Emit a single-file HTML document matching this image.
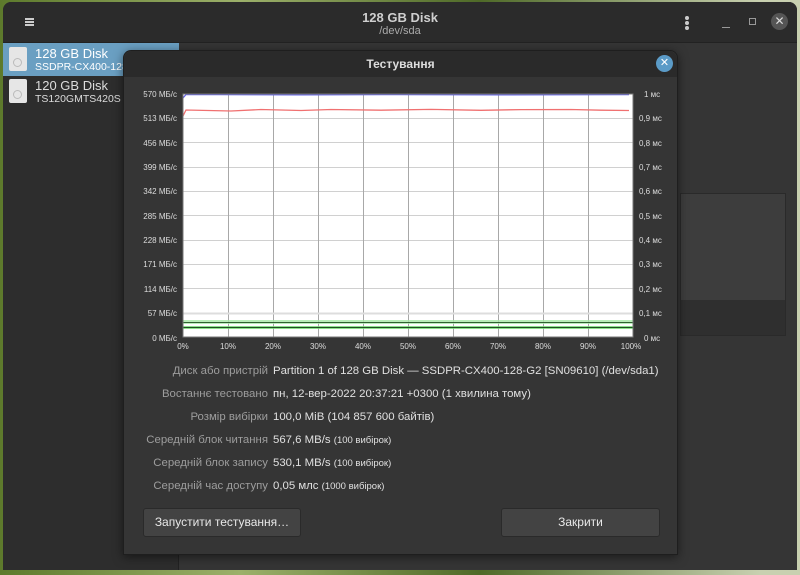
<!DOCTYPE html>
<html><head><meta charset="utf-8"><style>
*{margin:0;padding:0;box-sizing:border-box}
body{width:800px;height:575px;overflow:hidden;background:linear-gradient(90deg,#5d7a2c,#9cb06a 30%,#4f6a28 60%,#c8d0b0 95%);font-family:"Liberation Sans","DejaVu Sans",sans-serif;position:relative}
.win{position:absolute;left:3px;top:2px;width:794px;height:568px;background:#353535;border-radius:8px 8px 0 0;overflow:hidden}
.hdr{position:absolute;left:0;top:0;width:794px;height:41px;background:#2b2b2b;border-bottom:1px solid #222}
.side{position:absolute;left:0;top:41px;width:176px;height:527px;background:#2d2d2d;border-right:1px solid #222}
.abs{position:absolute}
.t{color:#dcdcdc;font-size:12px;white-space:nowrap}
.dlg{position:absolute;left:123px;top:50px;width:555px;height:505px;background:#353535;border:1px solid #1e1e1e;border-radius:8px 8px 0 0;box-shadow:0 2px 10px rgba(0,0,0,.5)}
.dh{position:absolute;left:0;top:0;width:553px;height:26px;background:#2a2a2a;border-radius:8px 8px 0 0}
.row{position:absolute;left:0;width:555px;height:16px}
.row .l{position:absolute;right:411px;color:#9d9d9d;font-size:11.4px;white-space:nowrap}
.row .v{position:absolute;left:149px;color:#e0e0e0;font-size:11.4px;white-space:nowrap}
.row small{font-size:9.5px}
.btn{position:absolute;height:29px;background:#434343;border:1px solid #2a2a2a;border-radius:3px;color:#e8e8e8;font-size:12px;text-align:center;line-height:27px}
</style></head><body>
<div class="win">
 <div class="hdr">
  <div class="abs" style="left:22px;top:16px;width:9px;height:2px;background:#ccc;box-shadow:0 3px 0 #ccc,0 6px 0 #ccc"></div>
  <div class="abs t" style="left:0;width:794px;text-align:center;top:8px;font-weight:bold;font-size:13px;color:#cfcfcf">128 GB Disk</div>
  <div class="abs t" style="left:0;width:794px;text-align:center;top:23px;font-size:11px;color:#aaa">/dev/sda</div>
  <div class="abs" style="left:682px;top:14px;width:4px;height:4px;border-radius:2px;background:#ccc;box-shadow:0 5px 0 #ccc,0 10px 0 #ccc"></div>
  <div class="abs" style="left:719px;top:25px;width:8px;height:1px;background:#999"></div>
  <div class="abs" style="left:746px;top:16px;width:7px;height:7px;border:1px solid #999"></div>
  <div class="abs" style="left:768px;top:11px;width:17px;height:17px;border-radius:50%;background:#555;color:#ddd;font-size:12px;text-align:center;line-height:17px">✕</div>
 </div>
 <div class="side">
  <div class="abs" style="left:0;top:0;width:176px;height:33px;background:#6a9fc2"></div>
  <div class="abs" style="left:6px;top:4px;width:18px;height:24px;background:#e6e6e6;border-radius:2px"><div class="abs" style="left:4px;top:11px;width:9px;height:9px;border-radius:50%;border:1px solid #bbb"></div></div>
  <div class="abs t" style="left:32px;top:3px;font-size:13px;color:#fff">128 GB Disk</div>
  <div class="abs t" style="left:32px;top:18px;font-size:10.5px;color:#fff">SSDPR-CX400-128-G2</div>
  <div class="abs" style="left:6px;top:36px;width:18px;height:24px;background:#e6e6e6;border-radius:2px"><div class="abs" style="left:4px;top:11px;width:9px;height:9px;border-radius:50%;border:1px solid #bbb"></div></div>
  <div class="abs t" style="left:32px;top:35px;font-size:13px">120 GB Disk</div>
  <div class="abs t" style="left:32px;top:50px;font-size:10.5px">TS120GMTS420S</div>
 </div>
 <div class="abs" style="left:677px;top:191px;width:106px;height:107px;background:#3d3d3d;border:1px solid #2a2a2a;border-bottom:none"></div>
 <div class="abs" style="left:677px;top:298px;width:106px;height:36px;background:#2f2f2f;border:1px solid #2a2a2a;border-top:none"></div>
</div>
<div class="dlg">
 <div class="dh"><div class="abs t" style="left:0;width:553px;text-align:center;top:6px;font-weight:bold;color:#ddd">Тестування</div>
  <div class="abs" style="left:532px;top:4px;width:17px;height:17px;border-radius:50%;background:#5b9bc7;color:#fff;font-size:11px;text-align:center;line-height:17px">✕</div></div>
 <svg class="abs" style="left:0;top:0" width="555" height="300" viewBox="123 50 555 300">
  <rect x="182" y="93" width="450" height="243" fill="#fff"/>
  <g stroke="#d0d0d0" stroke-width="1">
   <line x1="182" x2="632" y1="117.5" y2="117.5"/><line x1="182" x2="632" y1="141.5" y2="141.5"/><line x1="182" x2="632" y1="166.5" y2="166.5"/><line x1="182" x2="632" y1="190.5" y2="190.5"/><line x1="182" x2="632" y1="214.5" y2="214.5"/><line x1="182" x2="632" y1="239.5" y2="239.5"/><line x1="182" x2="632" y1="263.5" y2="263.5"/><line x1="182" x2="632" y1="287.5" y2="287.5"/><line x1="182" x2="632" y1="312.5" y2="312.5"/>
  </g>
  <g stroke="#a8a8a8" stroke-width="1">
   <line y1="93" y2="336" x1="227.5" x2="227.5"/><line y1="93" y2="336" x1="272.5" x2="272.5"/><line y1="93" y2="336" x1="317.5" x2="317.5"/><line y1="93" y2="336" x1="362.5" x2="362.5"/><line y1="93" y2="336" x1="407.5" x2="407.5"/><line y1="93" y2="336" x1="452.5" x2="452.5"/><line y1="93" y2="336" x1="497.5" x2="497.5"/><line y1="93" y2="336" x1="542.5" x2="542.5"/><line y1="93" y2="336" x1="587.5" x2="587.5"/>
  </g>
  <polyline fill="none" stroke="#6060e8" stroke-width="1.3" points="182,97 185,93.5 300,93.8 400,93.6 500,93.8 628,93.6"/>
  <polyline fill="none" stroke="#f07070" stroke-width="1.3" points="182,115 185,109 230,110 260,108.5 300,109.5 330,108.5 380,109.2 430,108.4 480,109.3 520,108.6 570,108.5 600,109.2 628,109.5"/>
  <rect x="182" y="319" width="450" height="4" fill="#a8e8a8" opacity=".8"/>
  <line x1="182" x2="632" y1="321.5" y2="321.5" stroke="#306030" stroke-width="1"/>
  <rect x="182" y="325" width="450" height="3" fill="#70d870" opacity=".8"/>
  <line x1="182" x2="632" y1="326.5" y2="326.5" stroke="#205020" stroke-width="1"/>
  <line x1="182" x2="632" y1="312.5" y2="312.5" stroke="#ddd" stroke-width="2"/>
  <rect x="182" y="93" width="450" height="243" fill="none" stroke="#777"/>
  <g font-size="8" fill="#ddd" text-anchor="end" font-family="Liberation Sans, sans-serif">
   <text x="176" y="96">570 МБ/с</text><text x="176" y="120">513 МБ/с</text><text x="176" y="145">456 МБ/с</text><text x="176" y="169">399 МБ/с</text><text x="176" y="193">342 МБ/с</text><text x="176" y="218">285 МБ/с</text><text x="176" y="242">228 МБ/с</text><text x="176" y="266">171 МБ/с</text><text x="176" y="291">114 МБ/с</text><text x="176" y="315">57 МБ/с</text><text x="176" y="340">0 МБ/с</text>
  </g>
  <g font-size="8" fill="#ddd" font-family="Liberation Sans, sans-serif">
   <text x="643" y="96">1 мс</text><text x="638" y="120">0,9 мс</text><text x="638" y="145">0,8 мс</text><text x="638" y="169">0,7 мс</text><text x="638" y="193">0,6 мс</text><text x="638" y="218">0,5 мс</text><text x="638" y="242">0,4 мс</text><text x="638" y="266">0,3 мс</text><text x="638" y="291">0,2 мс</text><text x="638" y="315">0,1 мс</text><text x="643" y="340">0 мс</text>
  </g>
  <g font-size="8" fill="#ddd" text-anchor="middle" font-family="Liberation Sans, sans-serif">
   <text x="182" y="348">0%</text><text x="227" y="348">10%</text><text x="272" y="348">20%</text><text x="317" y="348">30%</text><text x="362" y="348">40%</text><text x="407" y="348">50%</text><text x="452" y="348">60%</text><text x="497" y="348">70%</text><text x="542" y="348">80%</text><text x="587" y="348">90%</text><text x="630" y="348">100%</text>
  </g>
 </svg>
 <div class="row" style="top:314px"><span class="l">Диск або пристрій</span><span class="v">Partition 1 of 128 GB Disk — SSDPR-CX400-128-G2 [SN09610] (/dev/sda1)</span></div>
 <div class="row" style="top:337px"><span class="l">Востаннє тестовано</span><span class="v">пн, 12-вер-2022 20:37:21 +0300 (1 хвилина тому)</span></div>
 <div class="row" style="top:360px"><span class="l">Розмір вибірки</span><span class="v">100,0 MiB (104 857 600 байтів)</span></div>
 <div class="row" style="top:383px"><span class="l">Середній блок читання</span><span class="v">567,6 MB/s <small>(100 вибірок)</small></span></div>
 <div class="row" style="top:406px"><span class="l">Середній блок запису</span><span class="v">530,1 MB/s <small>(100 вибірок)</small></span></div>
 <div class="row" style="top:429px"><span class="l">Середній час доступу</span><span class="v">0,05 млс <small>(1000 вибірок)</small></span></div>
 <div class="btn" style="left:19px;top:457px;width:158px">Запустити тестування…</div>
 <div class="btn" style="left:377px;top:457px;width:159px">Закрити</div>
</div>
</body></html>
